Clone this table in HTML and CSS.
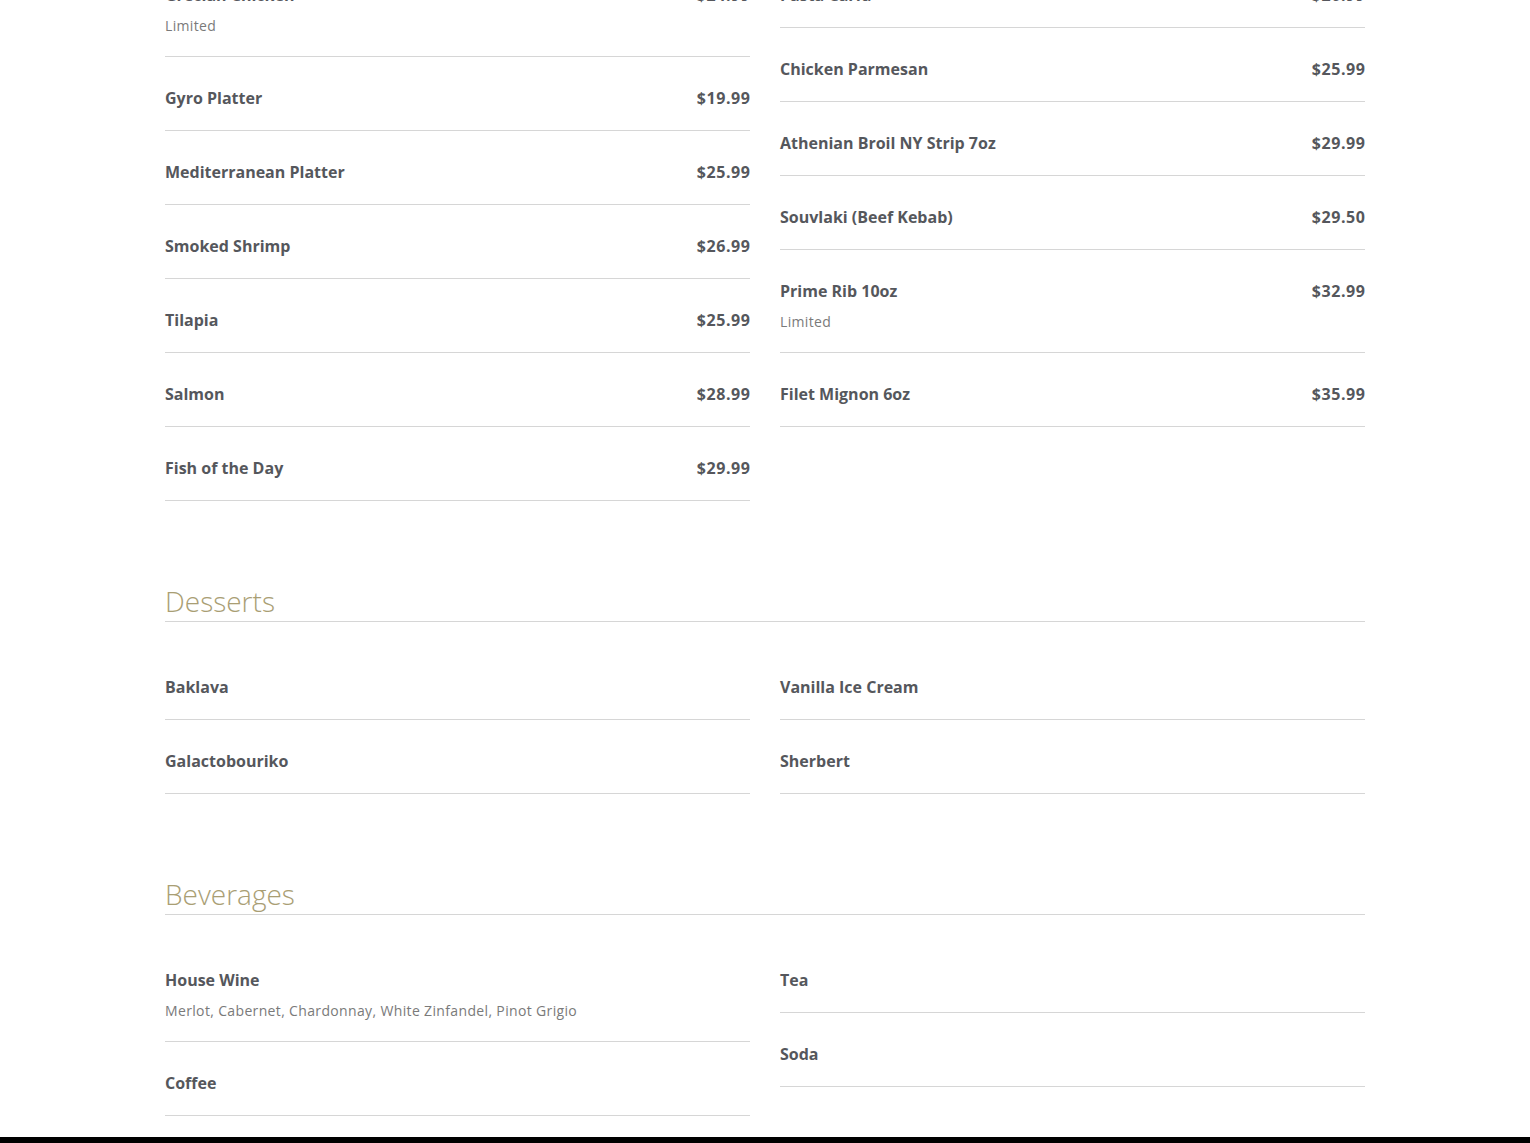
FILE: index.html
```html
<!DOCTYPE html>
<html lang="en">
<head>
<meta charset="utf-8">
<title>Menu</title>
<link rel="stylesheet" href="styles.css">
</head>
<body>
<main class="menu">
  <section class="section section-first">
    <div class="grid">
      <div class="col">
        <div class="item"><div class="row"><span class="name">Grecian Chicken</span><span class="price">$24.99</span></div><div class="desc">Limited</div></div>
        <div class="item"><div class="row"><span class="name">Gyro Platter</span><span class="price">$19.99</span></div></div>
        <div class="item"><div class="row"><span class="name">Mediterranean Platter</span><span class="price">$25.99</span></div></div>
        <div class="item"><div class="row"><span class="name">Smoked Shrimp</span><span class="price">$26.99</span></div></div>
        <div class="item"><div class="row"><span class="name">Tilapia</span><span class="price">$25.99</span></div></div>
        <div class="item"><div class="row"><span class="name">Salmon</span><span class="price">$28.99</span></div></div>
        <div class="item"><div class="row"><span class="name">Fish of the Day</span><span class="price">$29.99</span></div></div>
      </div>
      <div class="col">
        <div class="item"><div class="row"><span class="name">Pasta Carfa</span><span class="price">$26.99</span></div></div>
        <div class="item"><div class="row"><span class="name">Chicken Parmesan</span><span class="price">$25.99</span></div></div>
        <div class="item"><div class="row"><span class="name">Athenian Broil NY Strip 7oz</span><span class="price">$29.99</span></div></div>
        <div class="item"><div class="row"><span class="name">Souvlaki (Beef Kebab)</span><span class="price">$29.50</span></div></div>
        <div class="item"><div class="row"><span class="name">Prime Rib 10oz</span><span class="price">$32.99</span></div><div class="desc">Limited</div></div>
        <div class="item"><div class="row"><span class="name">Filet Mignon 6oz</span><span class="price">$35.99</span></div></div>
      </div>
    </div>
  </section>

  <section class="section">
    <h2 class="heading">Desserts</h2>
    <div class="grid">
      <div class="col">
        <div class="item"><div class="row"><span class="name">Baklava</span></div></div>
        <div class="item"><div class="row"><span class="name">Galactobouriko</span></div></div>
      </div>
      <div class="col">
        <div class="item"><div class="row"><span class="name">Vanilla Ice Cream</span></div></div>
        <div class="item"><div class="row"><span class="name">Sherbert</span></div></div>
      </div>
    </div>
  </section>

  <section class="section">
    <h2 class="heading">Beverages</h2>
    <div class="grid">
      <div class="col">
        <div class="item"><div class="row"><span class="name">House Wine</span></div><div class="desc">Merlot, Cabernet, Chardonnay, White Zinfandel, Pinot Grigio</div></div>
        <div class="item"><div class="row"><span class="name">Coffee</span></div></div>
      </div>
      <div class="col">
        <div class="item"><div class="row"><span class="name">Tea</span></div></div>
        <div class="item"><div class="row"><span class="name">Soda</span></div></div>
      </div>
    </div>
  </section>
</main>
<footer class="footer"></footer>
</body>
</html>
```
FILE: styles.css
```css
html, body {
  margin: 0;
  padding: 0;
  background: #ffffff;
}
body {
  font-family: "Open Sans", "Liberation Sans", sans-serif;
  color: #54565b;
}
.menu {
  width: 1200px;
  margin: -46px auto 0;
  padding-bottom: 21px;
}
.section + .section {
  margin-top: 84px;
}
.heading {
  margin: 0 0 24px;
  font-family: "Open Sans", sans-serif;
  font-weight: 300;
  font-size: 28px;
  line-height: 32px;
  color: #a99e74;
  padding-bottom: 4px;
  border-bottom: 1px solid #d6d6d6;
}
.grid {
  display: grid;
  grid-template-columns: 1fr 1fr;
  column-gap: 30px;
  align-items: start;
}
.item {
  padding: 28px 0 19px;
  border-bottom: 1px solid #d6d6d6;
}
.row {
  display: flex;
  justify-content: space-between;
  align-items: center;
}
.name, .price {
  font-size: 16px;
  font-weight: 700;
  line-height: 26px;
  color: #55575c;
}
.price {
  letter-spacing: 0.6px;
  margin-right: -0.6px;
}
.desc {
  margin-top: 6px;
  font-size: 14px;
  font-weight: 400;
  letter-spacing: 0.35px;
  line-height: 24px;
  color: #7a7a7a;
}
.item:has(.desc) {
  padding-bottom: 18px;
}
.footer {
  background: #000;
  height: 60px;
}
```
